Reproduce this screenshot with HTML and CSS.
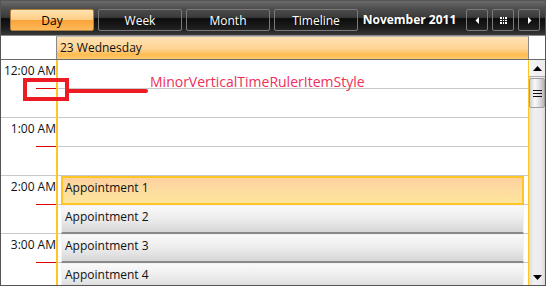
FILE: index.html
```html
<!DOCTYPE html>
<html lang="en">
<head>
  <meta charset="UTF-8">
  <title>Scheduler - MinorVerticalTimeRulerItemStyle</title>
  <link rel="stylesheet" href="styles.css">
</head>
<body>
  <div class="scheduler">
    <div class="toolbar">
      <button class="view-btn active">Day</button>
      <button class="view-btn">Week</button>
      <button class="view-btn">Month</button>
      <button class="view-btn">Timeline</button>
      <span class="current-date">November 2011</span>
      <button class="nav-btn">
        <svg width="5" height="7" viewBox="0 0 5 7"><path d="M4 0v7L0.5 3.5z" fill="#fff"/></svg>
      </button>
      <button class="nav-btn">
        <svg width="7" height="7" viewBox="0 0 7 7"><path d="M0 0h7v7H0z" fill="#fff"/><path d="M2.5 0v7M4.5 0v7M0 2.5h7M0 4.5h7" stroke="#222" stroke-width="1"/></svg>
      </button>
      <button class="nav-btn">
        <svg width="5" height="7" viewBox="0 0 5 7"><path d="M1 0v7l3.5-3.5z" fill="#fff"/></svg>
      </button>
    </div>

    <div class="header-row">
      <div class="corner"></div>
      <div class="day-header">23 Wednesday</div>
      <div class="corner-right"></div>
    </div>

    <div class="body">
      <div class="ruler">
        <div class="hour"><span>12:00 AM</span><i class="minor"></i></div>
        <div class="hour"><span>1:00 AM</span><i class="minor"></i></div>
        <div class="hour"><span>2:00 AM</span><i class="minor"></i></div>
        <div class="hour"><span>3:00 AM</span><i class="minor"></i></div>
      </div>
      <div class="day-column">
        <div class="slot"></div><div class="slot major"></div>
        <div class="slot"></div><div class="slot major"></div>
        <div class="slot"></div><div class="slot major"></div>
        <div class="slot"></div><div class="slot major"></div>
        <div class="appointments">
          <div class="appt selected">Appointment 1</div>
          <div class="appt">Appointment 2</div>
          <div class="appt">Appointment 3</div>
          <div class="appt">Appointment 4</div>
        </div>
      </div>
      <div class="scrollbar">
        <div class="scroll-btn">
          <svg width="9" height="5" viewBox="0 0 9 5"><path d="M0 5h9L4.5 0z" fill="#000"/></svg>
        </div>
        <div class="thumb"><i></i><i></i><i></i></div>
        <div class="track"></div>
        <div class="scroll-btn down">
          <svg width="9" height="5" viewBox="0 0 9 5"><path d="M0 0h9L4.5 5z" fill="#000"/></svg>
        </div>
      </div>
    </div>

    <!-- annotation -->
    <div class="callout-box"></div>
    <div class="callout-line"></div>
    <div class="callout-text">MinorVerticalTimeRulerItemStyle</div>
  </div>
</body>
</html>
```

FILE: styles.css
```css
body {
  margin: 0;
  font-family: "Open Sans", "DejaVu Sans", sans-serif;
  background-color: #fff;
}
.scheduler {
  position: relative;
  width: 546px;
  height: 286px;
  box-sizing: border-box;
  border: 1px solid #555;
  display: flex;
  flex-direction: column;
  overflow: hidden;
  background-color: #fff;
}
.toolbar {
  height: 35px;
  box-sizing: border-box;
  display: flex;
  align-items: flex-start;
  padding: 8px 5px 0 9px;
  gap: 4px;
  border-bottom: 1px solid #8a8a8a;
  background: linear-gradient(#6a6a6a 0%, #505050 20%, #3a3a3a 48%, #0c0c0c 52%, #1e1e1e 80%, #3a3a3a 100%);
}
.view-btn {
  width: 84px;
  height: 22px;
  box-sizing: border-box;
  border: 1px solid #7a7a7a;
  border-radius: 2px;
  background: transparent;
  color: #fff;
  font-family: inherit;
  font-size: 12px;
  padding: 0;
}
.view-btn.active {
  color: #000;
  border-color: #b08040;
  background: linear-gradient(#ffe3b0 0%, #ffcf86 48%, #fca33a 52%, #fdb95a 100%);
}
.current-date {
  color: #fff;
  font-weight: bold;
  font-size: 12px;
  line-height: 22px;
  margin: 0 4px 0 -1px;
  flex: 1;
  text-align: center;
}
.nav-btn {
  width: 22px;
  height: 22px;
  box-sizing: border-box;
  border: 1px solid #7a7a7a;
  border-radius: 2px;
  background: transparent;
  padding: 0;
  display: flex;
  align-items: center;
  justify-content: center;
}
.header-row {
  display: flex;
  height: 24px;
  box-sizing: border-box;
  border-bottom: 1px solid #6a6a6a;
}
.corner {
  width: 55px;
}
.day-header {
  flex: 1;
  border-left: 1px solid #8a8a8a;
  border-right: 1px solid #8a8a8a;
  border-top: 1px solid #bbb;
  background: linear-gradient(#ffe2b2 0%, #ffd494 55%, #ffbb50 80%, #ffcc70 100%);
  font-size: 12px;
  line-height: 21px;
  padding-left: 3px;
  color: #111;
}
.corner-right {
  width: 16px;
}
.body {
  flex: 1;
  display: flex;
  position: relative;
  overflow: hidden;
}
.ruler {
  width: 55px;
  flex: none;
}
.hour {
  position: relative;
  height: 58px;
  box-sizing: border-box;
  border-bottom: 1px solid #c8c8c8;
  margin-right: -2px;
  text-align: right;
  font-size: 12px;
  color: #111;
  padding: 2px 2px 0 0;
}
.hour span {
  display: block;
  line-height: 17px;
}
.minor {
  position: absolute;
  left: 35px;
  right: 2px;
  top: 28px;
  height: 1px;
  background-color: #e00000;
}
.day-column {
  position: relative;
  flex: 1;
  border-left: 2px solid #ffc526;
  z-index: 1;
}
.slot {
  height: 29px;
  box-sizing: border-box;
  border-bottom: 1px solid #c8c8c8;
}
.appointments {
  position: absolute;
  top: 116px;
  left: 3px;
  right: 4px;
  display: flex;
  flex-direction: column;
}
.appt {
  height: 29px;
  box-sizing: border-box;
  border: 1px solid #f2f2f2;
  border-bottom: 2px solid #8a8a8a;
  background: linear-gradient(#fafafa 0%, #eaeaea 55%, #d6d6d6 100%);
  font-size: 12px;
  line-height: 21px;
  padding-left: 3px;
  color: #111;
}
.appt.selected {
  border: 2px solid #ffc526;
  background: linear-gradient(#fdd1a0 0%, #fddca0 50%, #fee59c 100%);
  padding-left: 2px;
  line-height: 19px;
}
.scrollbar {
  width: 16px;
  flex: none;
  display: flex;
  flex-direction: column;
  background: linear-gradient(90deg, #dcdcdc, #f0f0f0 30%, #eaeaea 80%, #d8d8d8);
  border-left: 1px solid #ffc526;
}
.scroll-btn {
  height: 16px;
  display: flex;
  align-items: center;
  justify-content: center;
  border-bottom: 1px solid #b0b0b0;
  background: linear-gradient(90deg, #f6f6f6, #ececec);
}
.scroll-btn.down {
  border-bottom: none;
  background: transparent;
}
.thumb {
  height: 30px;
  margin-top: 1px;
  box-sizing: border-box;
  border: 1px solid #a0a0a0;
  border-radius: 2px;
  background: linear-gradient(90deg, #d0d0d0, #fafafa 35%, #e0e0e0 65%, #b8b8b8);
  display: flex;
  flex-direction: column;
  align-items: center;
  justify-content: center;
  gap: 2px;
}
.thumb i {
  width: 9px;
  height: 1px;
  background-color: #111;
}
.track {
  flex: 1;
}
.callout-box {
  position: absolute;
  left: 22px;
  top: 77px;
  width: 46px;
  height: 23px;
  box-sizing: border-box;
  border: 4px solid #ed1c24;
  z-index: 5;
}
.callout-line {
  position: absolute;
  left: 67px;
  top: 88px;
  width: 80px;
  height: 4px;
  border-radius: 0 2px 2px 0;
  background-color: #ed1c24;
  z-index: 5;
}
.callout-text {
  position: absolute;
  left: 149px;
  top: 71px;
  font-size: 14px;
  color: #ee2e5a;
  z-index: 5;
}
```
